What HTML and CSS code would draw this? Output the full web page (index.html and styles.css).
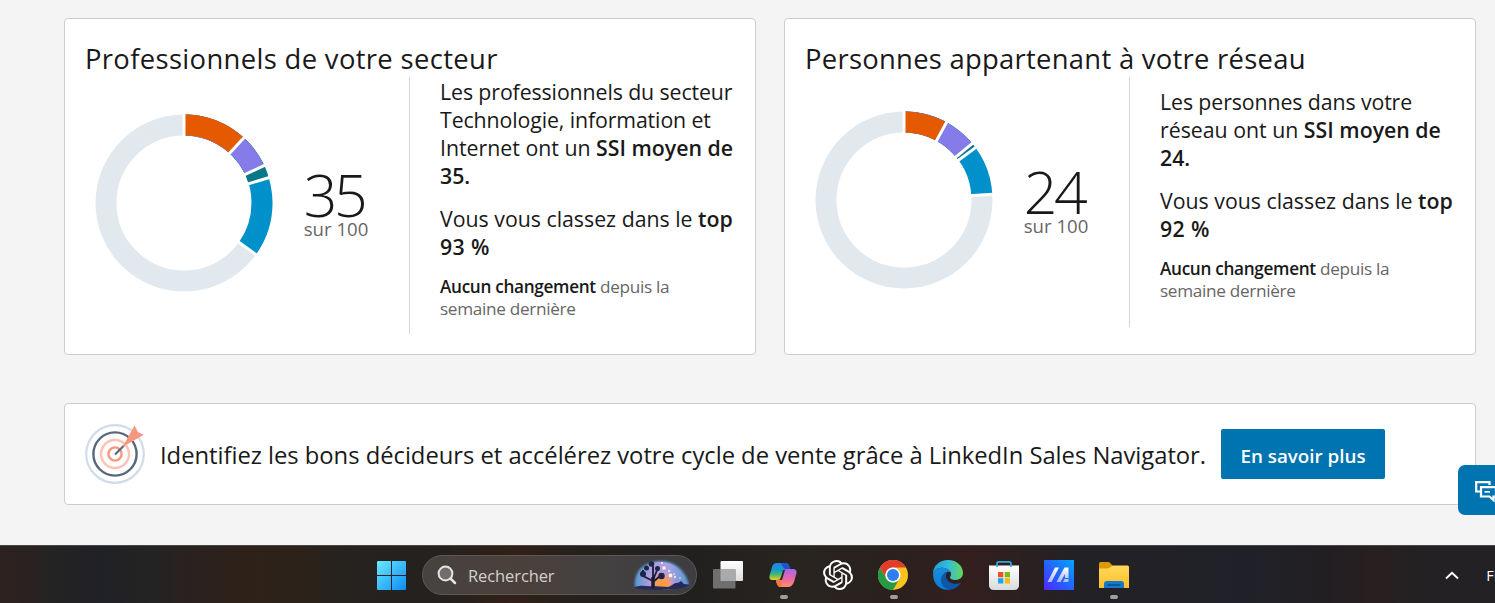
FILE: index.html
```html
<!DOCTYPE html>
<html lang="fr">
<head>
<meta charset="utf-8">
<title>Social Selling Index</title>
<link rel="stylesheet" href="styles.css">
</head>
<body>
<main class="page">
  <section class="cards">
    <article class="card">
      <h2 class="card-title title-sector">Professionnels de votre secteur</h2>
      <div class="card-body body-sector">
        <div class="score">
          <svg class="donut" viewBox="-89 -89 178 178">
            <g class="ring" transform="rotate(-90)">
              <circle r="78" class="rest"/>
              <circle r="78" pathLength="360" class="blue" stroke-dasharray="125.5 360"/>
              <circle r="78" pathLength="360" class="teal" stroke-dasharray="73.5 360"/>
              <circle r="78" pathLength="360" class="violet" stroke-dasharray="65 360"/>
              <circle r="78" pathLength="360" class="orange" stroke-dasharray="42.5 360"/>
            </g>
            <g class="gaps">
              <path d="M0-64V-90"/>
              <path d="M0-64V-90" transform="rotate(42.5)"/>
              <path d="M0-64V-90" transform="rotate(65)"/>
              <path d="M0-64V-90" transform="rotate(73.4)"/>
              <path d="M0-64V-90" transform="rotate(125.6)"/>
            </g>
          </svg>
          <div class="value"><span class="number">35</span><span class="outof">sur 100</span></div>
        </div>
        <div class="details">
          <p class="lead"><span class="tight">Les professionnels du secteur</span><br><span class="tight">Technologie, information et</span><br>Internet ont un <b>SSI moyen de</b><br><b>35.</b></p>
          <p class="lead rank">Vous vous classez dans le <b>top</b><br><b class="wide">93 %</b></p>
          <p class="change"><b>Aucun changement</b> depuis la<br>semaine dernière</p>
        </div>
      </div>
    </article>
    <article class="card">
      <h2 class="card-title title-network">Personnes appartenant à votre réseau</h2>
      <div class="card-body body-network">
        <div class="score">
          <svg class="donut" viewBox="-89 -89 178 178">
            <g class="ring" transform="rotate(-90)">
              <circle r="78" class="rest"/>
              <circle r="78" pathLength="360" class="blue" stroke-dasharray="86.3 360"/>
              <circle r="78" pathLength="360" class="teal" stroke-dasharray="53.7 360"/>
              <circle r="78" pathLength="360" class="violet" stroke-dasharray="50.6 360"/>
              <circle r="78" pathLength="360" class="orange" stroke-dasharray="28.7 360"/>
            </g>
            <g class="gaps">
              <path d="M0-64V-90"/>
              <path d="M0-64V-90" transform="rotate(28.7)"/>
              <path d="M0-64V-90" transform="rotate(50.4)"/>
              <path d="M0-64V-90" transform="rotate(53.8)"/>
              <path d="M0-64V-90" transform="rotate(86.3)"/>
            </g>
          </svg>
          <div class="value"><span class="number">24</span><span class="outof">sur 100</span></div>
        </div>
        <div class="details">
          <p class="lead"><span class="tight">Les personnes dans votre</span><br>réseau ont un <b>SSI moyen de</b><br><b>24.</b></p>
          <p class="lead rank">Vous vous classez dans le <b>top</b><br><b class="wide">92 %</b></p>
          <p class="change"><b>Aucun changement</b> depuis la<br>semaine dernière</p>
        </div>
      </div>
    </article>
  </section>
  <section class="promo">
    <svg class="target" viewBox="0 0 60 60" fill="none">
      <circle cx="30" cy="30" r="28.800" stroke="#d0dcea" stroke-width="2.2"/>
      <circle cx="30" cy="30" r="21.6" stroke="#56687a" stroke-width="2.4"/>
      <circle cx="30" cy="30" r="14" stroke="#fcc2b4" stroke-width="2.4"/>
      <circle cx="30" cy="30" r="6.6" stroke="#f8977f" stroke-width="2.4"/>
      <path d="M30 30.500L39 21.500" stroke="#56687a" stroke-width="2.2"/>
      <path d="M37.500 23L49.500 1.500L52 6L52.800 8L58.800 10.800Z" fill="#f8977f"/>
    </svg>
    <p class="promo-text">Identifiez les bons décideurs et accélérez votre cycle de vente grâce à LinkedIn Sales Navigator.</p>
    <a class="button">En savoir plus</a>
  </section>
  <a class="feedback">
    <svg width="24" height="24" viewBox="0 0 24 24" fill="none" stroke="#fff">
      <path d="M6.500 12.500H2.200V3.200H15.500V6" stroke-width="2.200"/>
      <path d="M7 8.200H22V17.500H19.500V21L15.500 17.500H7Z" stroke-width="2.200"/>
      <path d="M10.500 12.800H16" stroke-width="1.700"/>
    </svg>
  </a>
</main>
<footer class="taskbar">
  <svg class="start" viewBox="0 0 29 29">
    <defs><linearGradient id="win" x1="0" y1="0" x2="29" y2="29" gradientUnits="userSpaceOnUse"><stop offset="0" stop-color="#6ce9fb"/><stop offset="1" stop-color="#0a8cf6"/></linearGradient></defs>
    <path fill="url(#win)" d="M1 0H14V14H0V1Q0 0 1 0ZM15 0H28Q29 0 29 1V14H15ZM0 15H14V29H1Q0 29 0 28ZM15 15H29V28Q29 29 28 29H15Z"/>
  </svg>
  <div class="search">
    <svg class="lens" viewBox="0 0 20 20" fill="none" stroke="#e4e4e4"><circle cx="8.500" cy="8.500" r="6.900" fill="#716d6c" stroke-width="2"/><path d="M13.500 13.500L18 18" stroke-width="2.500" stroke-linecap="round"/></svg>
    <span class="search-label">Rechercher</span>
    <svg class="scene" viewBox="0 0 58 32">
      <defs>
        <linearGradient id="sky" x1="0" x2="1"><stop offset="0" stop-color="#5e9bd3"/><stop offset=".28" stop-color="#b69be0"/><stop offset=".65" stop-color="#a5a2e2"/><stop offset="1" stop-color="#6197d2"/></linearGradient>
        <radialGradient id="sun"><stop offset="0" stop-color="#ff9d24"/><stop offset=".5" stop-color="#f29a72"/><stop offset="1" stop-color="#d294bd" stop-opacity="0"/></radialGradient>
        <clipPath id="dome"><path d="M1 29C0 10 12 1 28 1S56 14 57 26C52 32 6 32 1 29Z"/></clipPath>
        <filter id="soft"><feGaussianBlur stdDeviation="1"/></filter>
      </defs>
      <path d="M2 29C0 11 12 2 28 2S54 14 56 27Z" fill="#5e9bd3" filter="url(#soft)"/>
      <g clip-path="url(#dome)">
        <path d="M4 30C3 11 14 3 28 3S52 14 54 28Z" fill="url(#sky)"/>
        <circle cx="29" cy="25" r="14" fill="url(#sun)"/>
        <path d="M0 29C8 25 14 28 20 27L35 28C39 27 42 23 45 24L48 22L51 25L58 26V32H0Z" fill="#282b59"/>
      </g>
      <g stroke="#171d38" fill="none" stroke-width="1.800"><path d="M20 29V7M20 22L10 17V11M20 23L27 17M20 21L25 9" /><path d="M20 29V18" stroke-width="3.500"/></g>
      <g fill="#1a2547"><circle cx="10" cy="15" r="3"/><circle cx="13.500" cy="9" r="2.500"/><circle cx="18.500" cy="5" r="2.800"/><circle cx="24.500" cy="9.500" r="2.500"/><circle cx="28.500" cy="17" r="3.200"/></g>
      <g fill="#fff3e2"><circle cx="31" cy="9" r="1.800"/><circle cx="37.500" cy="16.500" r="1.900"/><circle cx="29" cy="4" r="1"/><circle cx="36" cy="12" r="1"/><circle cx="42" cy="18" r="1"/><circle cx="47" cy="19" r=".8"/><circle cx="41" cy="15" r=".8"/></g>
    </svg>
  </div>
  <div class="apps">
    <span class="app"><svg viewBox="0 0 30 30">
      <defs><linearGradient id="tv" x2="0" y2="1"><stop stop-color="#fff"/><stop offset="1" stop-color="#ddd"/></linearGradient></defs>
      <rect x="7.500" y="1" width="22.500" height="20" rx="1" fill="url(#tv)"/><rect x="0" y="9" width="22.500" height="19.500" rx="1" fill="#6f6f6f"/><path d="M7.500 9H22.500V21H7.500Z" fill="#aaa"/></svg></span>
    <span class="app running"><svg viewBox="0 0 30 30">
      <defs>
        <linearGradient id="ca" x2="0" y2="1"><stop stop-color="#2185ec"/><stop offset=".4" stop-color="#139bc7"/><stop offset=".7" stop-color="#4dbb67"/><stop offset="1" stop-color="#ecd11b"/></linearGradient>
        <linearGradient id="cb" x2="0" y2="1"><stop stop-color="#a368ed"/><stop offset=".5" stop-color="#e763ae"/><stop offset="1" stop-color="#ff9066"/></linearGradient>
      </defs>
      <path d="M9 3H18Q21 3 22 9H18Q16 9 15 13L13 18Q12 20 9 20H4Q1 20 1.500 16L4 7Q5 3 9 3Z" fill="url(#ca)"/>
      <path d="M13 3H18Q21 3 22 9H18Q16 9 15 7Z" fill="#2051cb"/>
      <path d="M8 20Q12 20 13 17L15 12Q16 9 19 9H25Q29 9 28.500 13L26 22Q24 27 20 27H12Q9 27 8 20Z" fill="url(#cb)"/>
      <path d="M8 20Q12 20 13 17L14 25Q14 27 12 27Q9 27 8 20Z" fill="#f47a3c"/>
      <path d="M15 10H17L14 20H11.500Q13 18 15 10Z" fill="#2a2724"/></svg></span>
    <span class="app"><svg viewBox="0 0 24 24"><path fill="#fff" d="M22.2819 9.8211a5.9847 5.9847 0 0 0-.5157-4.9108 6.0462 6.0462 0 0 0-6.5098-2.9A6.0651 6.0651 0 0 0 4.9807 4.1818a5.9847 5.9847 0 0 0-3.9977 2.9 6.0462 6.0462 0 0 0 .7427 7.0966 5.98 5.98 0 0 0 .511 4.9107 6.051 6.051 0 0 0 6.5146 2.9001A5.9847 5.9847 0 0 0 13.2599 24a6.0557 6.0557 0 0 0 5.7718-4.2058 5.9894 5.9894 0 0 0 3.9977-2.9001 6.0557 6.0557 0 0 0-.7475-7.0729zm-9.022 12.6081a4.4755 4.4755 0 0 1-2.8764-1.0408l.1419-.0804 4.7783-2.7582a.7948.7948 0 0 0 .3927-.6813v-6.7369l2.02 1.1686a.071.071 0 0 1 .038.052v5.5826a4.504 4.504 0 0 1-4.4945 4.4944zm-9.6607-4.1254a4.4708 4.4708 0 0 1-.5346-3.0137l.142.0852 4.783 2.7582a.7712.7712 0 0 0 .7806 0l5.8428-3.3685v2.3324a.0804.0804 0 0 1-.0332.0615L9.74 19.9502a4.4992 4.4992 0 0 1-6.1408-1.6464zM2.3408 7.8956a4.485 4.485 0 0 1 2.3655-1.9728V11.6a.7664.7664 0 0 0 .3879.6765l5.8144 3.3543-2.0201 1.1685a.0757.0757 0 0 1-.071 0l-4.8303-2.7865A4.504 4.504 0 0 1 2.3408 7.872zm16.5963 3.8558L13.1038 8.364 15.1192 7.2a.0757.0757 0 0 1 .071 0l4.8303 2.7913a4.4944 4.4944 0 0 1-.6765 8.1042v-5.6772a.79.79 0 0 0-.407-.667zm2.0107-3.0231l-.142-.0852-4.7735-2.7818a.7759.7759 0 0 0-.7854 0L9.409 9.2297V6.8974a.0662.0662 0 0 1 .0284-.0615l4.8303-2.7866a4.4992 4.4992 0 0 1 6.6802 4.66zM8.3065 12.863l-2.02-1.1638a.0804.0804 0 0 1-.038-.0567V6.0742a4.4992 4.4992 0 0 1 7.3757-3.4537l-.142.0805L8.704 5.459a.7948.7948 0 0 0-.3927.6813zm1.0976-2.3654l2.602-1.4998 2.6069 1.4998v2.9994l-2.5974 1.4997-2.6067-1.4997Z"/></svg></span>
    <span class="app running"><svg viewBox="0 0 30 30">
      <circle cx="15" cy="15" r="15" fill="#fcc31e"/>
      <path d="M2 7.500A15 15 0 0 0 15 30L21.500 18.800A7.500 7.500 0 0 1 8.500 18.800Z" fill="#259b48"/>
      <path d="M2 7.500A15 15 0 0 1 28 7.500H15A7.500 7.500 0 0 0 8.500 18.800Z" fill="#e33b2e"/>
      <circle cx="15" cy="15" r="7.600" fill="#fff"/><circle cx="15" cy="15" r="6" fill="#2f7ef0"/></svg></span>
    <span class="app"><svg viewBox="0 0 30 30">
      <defs>
        <linearGradient id="ea" x2="1"><stop stop-color="#2499dc"/><stop offset=".5" stop-color="#33bddc"/><stop offset="1" stop-color="#65d957"/></linearGradient>
        <linearGradient id="eb" x2="0" y2="1"><stop stop-color="#178fd9"/><stop offset="1" stop-color="#1079d5"/></linearGradient>
      </defs>
      <path d="M0 14C0 5 7 0 15 0C24 0 30 6 30 13C30 17 27 20 22.500 20C19 20 17 19 17 17.500C17 16.500 18 16 18 14C18 12 16 9 11 8C6 7 2 9 0 14Z" fill="url(#ea)"/>
      <path d="M0 14C2 9 6 7 11 8C14 8.500 16.500 10 17.500 12C13 11 10 14 10 18C10 24 14 28 20 28.500C9 33 0 25 0 14Z" fill="url(#eb)"/>
      <path d="M15 12C10 13 8 16 8 20C8 26 13 30 18 29.500C22 29 26 26 28 22.500C23 25 14 24 13 16.500C12.800 14 14 12.500 15 12Z" fill="#0d57a8"/></svg></span>
    <span class="app"><svg viewBox="0 0 30 30">
      <defs><linearGradient id="bag" x2="0" y2="1"><stop stop-color="#fff"/><stop offset="1" stop-color="#d9dadd"/></linearGradient></defs>
      <path d="M0 5.500H30V25Q30 30 25 30H5Q0 30 0 25Z" fill="url(#bag)"/>
      <path d="M8 7V3.500Q8 1.800 10 1.800H20Q22 1.800 22 3.500V7" fill="none" stroke="#2dacd9" stroke-width="1.700"/>
      <path d="M9 12H14.300V17.300H9Z" fill="#f05025"/><path d="M15.700 12H21V17.300H15.700Z" fill="#7dba16"/><path d="M9 18.200H14.300V23.500H9Z" fill="#1ba5ea"/><path d="M15.700 18.200H21V23.500H15.700Z" fill="#fdb817"/></svg></span>
    <span class="app"><svg viewBox="0 0 30 30">
      <defs><linearGradient id="as" x1="0" y1="1" x2="1" y2="0"><stop stop-color="#5325ff"/><stop offset=".5" stop-color="#2266ff"/><stop offset="1" stop-color="#05a5ff"/></linearGradient>
      <linearGradient id="aw" x2="0" y2="1"><stop stop-color="#fff"/><stop offset="1" stop-color="#a9b8ff"/></linearGradient></defs>
      <path d="M0 0H30V30H0Z" fill="url(#as)"/>
      <path d="M11 7.500H15L7.500 22H3.500ZM20.500 7.500H24.500V18H21V14L16.500 22H12.500ZM20.500 19H24.500V22H19Z" fill="url(#aw)"/></svg></span>
    <span class="app running"><svg viewBox="0 0 30 30">
      <defs><linearGradient id="fo" x2="0" y2="1"><stop stop-color="#ffd958"/><stop offset="1" stop-color="#fdbf2c"/></linearGradient></defs>
      <path d="M0 3.500Q0 2 1.500 2H10L13.500 5.500V9H0Z" fill="#dc9a05"/>
      <path d="M0 8.500H9L14 5.500H28.500Q30 5.500 30 7V28H0Z" fill="url(#fo)"/>
      <path d="M5 28V24Q5 21 8 21H22Q25 21 25 24V28Z" fill="#1479cd"/><path d="M9 25H21" stroke="#0a4d8e" stroke-width="1.300" stroke-linecap="round"/></svg></span>
  </div>
  <div class="tray">
    <svg width="14" height="9" viewBox="0 0 14 9" fill="none"><path d="M1 7.500L7 1.700L13 7.500" stroke="#fff" stroke-width="1.900"/></svg>
    <span class="lang">FRA</span>
  </div>
</footer>
</body>
</html>
```

FILE: styles.css
```css
* { box-sizing: border-box; }
body {
  margin: 0;
  width: 1495px;
  height: 603px;
  overflow: hidden;
  background: #f4f4f4;
  color: #191919;
  font-family: "Open Sans", "Noto Sans", sans-serif;
}
b { font-weight: 600; }
h2, p { margin: 0; font-weight: 400; white-space: nowrap; }

.page { position: relative; height: 545px; padding: 18px 19px 0 64px; }
.cards { display: grid; grid-template-columns: 692px 692px; gap: 28px; }
.card {
  height: 337px;
  padding: 21px 20px 0;
  background: #fff;
  border: 1px solid #cdcdcd;
  border-radius: 4px;
}
.card-title { font-size: 27.4px; line-height: 37px; }
.title-sector { letter-spacing: 0.35px; }
.title-network { letter-spacing: 0.28px; }
.card-body { display: flex; }
.score { display: flex; align-items: center; width: 325px; padding-left: 10px; border-right: 1px solid #d4d4d4; }
.body-sector .score { height: 257px; padding-bottom: 6px; }
.body-network .score { height: 250px; padding-bottom: 5px; }
.donut { flex: none; width: 178px; height: 178px; }
.ring { fill: none; stroke-width: 21; }
.rest { stroke: #e1e8ee; }
.blue { stroke: #0091ca; }
.teal { stroke: #077889; }
.violet { stroke: #867ce9; }
.orange { stroke: #e55900; }
.gaps { stroke: #fff; stroke-width: 3; }
.value { display: flex; flex-direction: column; align-items: center; width: 126px; padding-top: 5px; }
.number { margin-left: -4px; font-size: 59px; font-weight: 300; line-height: 48px; letter-spacing: -3.5px; }
.outof { color: #666; font-size: 18.6px; line-height: 22px; }

.details { padding: 1px 0 0 30px; }
.body-network .details { padding-top: 11px; }
.lead { font-size: 21.3px; line-height: 28px; }
.tight { letter-spacing: -0.1px; }
.wide { letter-spacing: 0.4px; }
.rank { margin-top: 15px; }
.change { margin-top: 15px; color: #666; font-size: 17.2px; line-height: 22px; letter-spacing: -0.32px; }
.change b { color: #191919; }

.promo {
  display: flex;
  align-items: center;
  height: 102px;
  margin-top: 48px;
  padding-left: 20px;
  background: #fff;
  border: 1px solid #cdcdcd;
  border-radius: 4px;
}
.target { width: 60px; height: 60px; overflow: visible; }
.promo-text { width: 1046px; margin-left: 15px; padding-top: 2px; font-size: 23.8px; line-height: 34px; letter-spacing: -0.03px; }
.button {
  width: 164px;
  height: 50px;
  margin-left: 15px;
  border-radius: 2px;
  background: #0073b1;
  color: #fff;
  font-size: 18.8px;
  font-weight: 600;
  line-height: 54px;
  text-align: center;
}
.feedback {
  position: absolute;
  left: 1458px;
  top: 465px;
  width: 50px;
  height: 50px;
  padding: 14px 0 0 16px;
  border-radius: 7px;
  background: #0073b1;
}

.taskbar {
  display: flex;
  align-items: center;
  height: 58px;
  padding: 1px 0 0 377px;
  border-top: 1px solid #464646;
  background: linear-gradient(90deg, #2e211f 0, #242323 50px, #202127 100px, #242323 150px, #2a211f 190px, #2e2118 245px, #2c2219 300px, #25221f 350px, #24211f 430px, #302017 510px, #24211f 600px, #22201f 700px, #29241f 810px, #29211e 880px, #321f1e 970px, #2d2020 1010px, #222126 1080px, #202128 1250px, #221f22 1330px, #281f20 1375px, #232123 1420px);
}
.taskbar > *, .search > * { flex: none; }
.start { width: 29px; height: 29px; }
.search {
  display: flex;
  align-items: center;
  width: 275px;
  height: 40px;
  margin-left: 16px;
  padding-left: 14px;
  border: 1px solid #5c5855;
  border-radius: 20px;
  background: linear-gradient(90deg, #474340, #4a403a 35%, #444141 65%, #3d3c40);
}
.lens { width: 20px; height: 20px; }
.search-label { width: 154px; margin-left: 11px; padding-top: 1px; color: #d2cfcd; font-size: 16.5px; letter-spacing: -0.1px; }
.scene { width: 58px; height: 32px; margin-left: 11px; }
.apps { display: flex; margin-left: 3.5px; }
.app { position: relative; display: flex; justify-content: center; width: 55.1px; }
.app svg { width: 30px; height: 30px; }
.running::after {
  content: "";
  position: absolute;
  left: 24px;
  top: 35px;
  width: 8px;
  height: 4px;
  border-radius: 2px;
  background: #a19f9e;
}
.tray { display: flex; align-items: center; gap: 27px; margin-left: 304px; color: #fff; }
.lang { font-size: 14.5px; }
```
